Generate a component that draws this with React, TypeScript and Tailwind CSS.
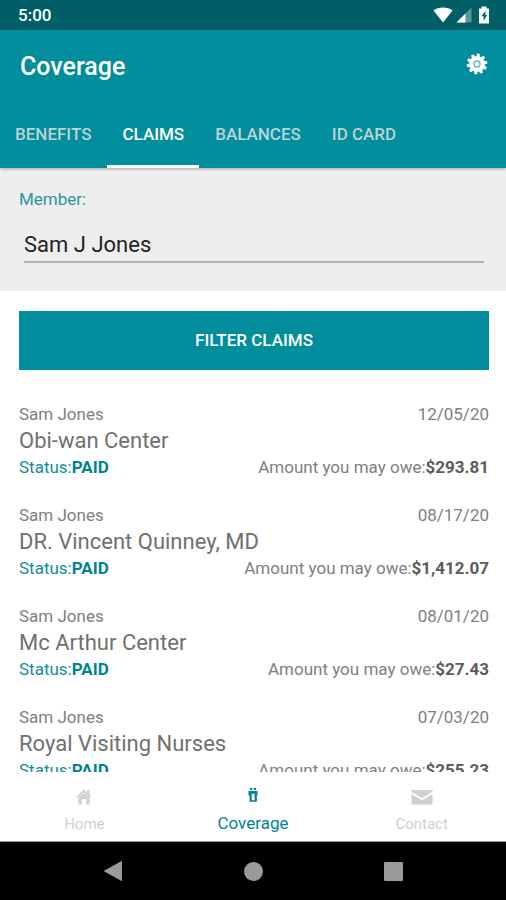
import { useState } from "react";
import clsx from "clsx";

type Claim = {
  member: string;
  date: string;
  provider: string;
  status: string;
  owed: string;
};

const TABS = ["BENEFITS", "CLAIMS", "BALANCES", "ID CARD"];

const CLAIMS: Claim[] = [
  { member: "Sam Jones", date: "12/05/20", provider: "Obi-wan Center", status: "PAID", owed: "$293.81" },
  { member: "Sam Jones", date: "08/17/20", provider: "DR. Vincent Quinney, MD", status: "PAID", owed: "$1,412.07" },
  { member: "Sam Jones", date: "08/01/20", provider: "Mc Arthur Center", status: "PAID", owed: "$27.43" },
  { member: "Sam Jones", date: "07/03/20", provider: "Royal Visiting Nurses", status: "PAID", owed: "$255.23" },
];

const GearIcon = () => (
  <svg viewBox="-11 -11 22 22" className="size-[22px]" aria-hidden="true">
    <circle r="7.8" fill="#fff" />
    {[0, 36, 72, 108, 144, 180, 216, 252, 288, 324].map((a) => (
      <path key={a} d="M-2 -7 L-1.3 -10.3 H1.3 L2 -7 Z" fill="#fff" transform={`rotate(${a + 8})`} />
    ))}
    <circle r="3" fill="none" stroke="#5fb5be" strokeWidth="1.3" />
    <circle r="1.2" fill="#d5eef0" />
  </svg>
);

const StatusBar = () => (
  <div className="flex h-[30px] shrink-0 items-center justify-between bg-[#005f66] pr-[13px] pl-[18px]">
    <span className="pt-0.5 text-[17px] font-medium text-white">5:00</span>
    <div className="flex items-center gap-[3px]" aria-hidden="true">
      <svg viewBox="0 0 20 16" className="h-4 w-5">
        <path d="M.5 3.4C6 -.4 14 -.4 19.5 3.4L10 15.5Z" fill="#fff" />
      </svg>
      <svg viewBox="0 0 16 16" className="size-4">
        <path d="M15.5 .5V15.5H.5Z" fill="#fff" opacity=".35" />
        <path d="M9.500 6.500V15.500H.5Z" fill="#fff" />
      </svg>
      <svg viewBox="0 0 18 18" className="size-[18px]">
        <path d="M6.500 .5h5v2H14v15H4v-15h2.500z" fill="#fff" />
        <path d="M10.300 4.800 6.600 10.200h2v4.600l3.600-5.800h-1.900z" fill="#005f66" />
      </svg>
    </div>
  </div>
);

const Header = () => {
  const [active, setActive] = useState("CLAIMS");

  return (
    <header className="z-10 shrink-0 bg-[#008d9c] shadow-[0_1px_3px_rgba(0,0,0,0.3)]">
      <div className="flex h-[72px] items-center justify-between pr-[18px] pl-5">
        <h1 className="pt-0.5 text-[25px] font-medium text-white">Coverage</h1>
        <button type="button" aria-label="Settings" className="pb-1">
          <GearIcon />
        </button>
      </div>
      <nav className="flex h-[66px] gap-px">
        {TABS.map((tab) => (
          <button
            key={tab}
            type="button"
            onClick={() => setActive(tab)}
            className={clsx(
              "border-y-[3px] border-t-transparent px-[15px] text-[17px] font-medium",
              tab === active ? "border-b-white text-white" : "border-b-transparent text-[#b9d3d6]"
            )}
          >
            {tab}
          </button>
        ))}
      </nav>
    </header>
  );
};

const ClaimRow = ({ claim }: { claim: Claim }) => (
  <li className="text-[17px] leading-6 text-[#808080]">
    <div className="flex justify-between">
      <span>{claim.member}</span>
      <span>{claim.date}</span>
    </div>
    <h2 className="text-[22px] leading-[29px] text-[#707070]">{claim.provider}</h2>
    <div className="flex justify-between">
      <span className="text-[#138c99]">
        Status:<b className="font-bold text-[#008391]">{claim.status}</b>
      </span>
      <span>
        Amount you may owe:<b className="font-bold text-[#5c5c5c]">{claim.owed}</b>
      </span>
    </div>
  </li>
);

const BottomNav = () => (
  <nav className="grid h-[70px] shrink-0 grid-cols-3 border-b border-[#999] bg-white text-[#d0d0d0]">
    <a href="#home" className="flex flex-col items-center pt-4 text-[15px] leading-5">
      <svg viewBox="0 0 16 18" className="mb-2 h-[18px] w-4" fill="currentColor" aria-hidden="true">
        <path d="M8 1.500 .8 8.500l1 1.200.7-.5v7.300h3.300V11h4.400v5.500h3.300V9.200l.7.5 1-1.200-1.700-1.600V2h-2.200v2.800z" />
        <path d="M2 10.300 8 5l6 5.300" fill="none" stroke="#fff" strokeWidth=".7" />
      </svg>
      Home
    </a>
    <a href="#coverage" className="flex flex-col items-center pt-3.5 text-[17px] leading-5 text-[#008391]">
      <svg viewBox="0 0 12 18" className="mb-[9px] h-[18px] w-3" fill="currentColor" aria-hidden="true">
        <circle cx="4.200" cy="3" r="1.300" />
        <circle cx="7.900" cy="3" r="1.300" />
        <path d="M1.500 5h9v4.500H9.800v6.300H2.600V9.500H1.500zM4.700 7.800v6.400h2.900V7.800z" fillRule="evenodd" />
      </svg>
      Coverage
    </a>
    <a href="#contact" className="flex flex-col items-center pt-4 text-[15px] leading-5">
      <svg viewBox="0 0 22 18" className="mb-2 h-[18px] w-[22px]" fill="currentColor" aria-hidden="true">
        <path d="M.5 2h21v1.800L11 10.300.5 3.800z" />
        <path d="M.5 6 11 12.300 21.500 6v10.500H.5z" />
      </svg>
      Contact
    </a>
  </nav>
);

const SystemNav = () => (
  <div className="flex h-[58px] shrink-0 items-center justify-center gap-[121px] bg-black text-[#9a9a9a]">
    <button type="button" aria-label="Back">
      <svg viewBox="0 0 20 22" className="h-[22px] w-5" fill="currentColor">
        <path d="M19 .8V21.200L.5 11z" />
      </svg>
    </button>
    <button type="button" aria-label="Home screen" className="size-[19px] rounded-full bg-current" />
    <button type="button" aria-label="Recent apps" className="size-[19px] rounded-[1px] bg-current" />
  </div>
);

export default function App() {
  const [member, setMember] = useState("Sam J Jones");

  return (
    <div className="flex h-screen flex-col overflow-hidden bg-white font-[Roboto,sans-serif]">
      <StatusBar />
      <Header />
      <main className="min-h-0 flex-1 overflow-hidden">
        <section className="bg-[#eee] pt-[19px] pr-[17px] pb-7 pl-[19px]">
          <label htmlFor="member" className="block text-[17px] leading-6 text-[#2f959f]">
            Member:
          </label>
          <div className="px-[5px] pt-[17px]">
            <input
              id="member"
              value={member}
              onChange={(e) => setMember(e.target.value)}
              className="block h-[35px] w-full border-b-2 border-[#b2b2b2] bg-transparent text-[22px] text-[#222] outline-none"
            />
          </div>
        </section>
        <section className="pt-5 pr-[17px] pl-[19px]">
          <button type="button" className="h-[59px] w-full bg-[#008d9c] text-[17px] font-medium text-white">
            FILTER CLAIMS
          </button>
          <ul className="mt-8 flex flex-col gap-6">
            {CLAIMS.map((claim) => (
              <ClaimRow key={claim.date} claim={claim} />
            ))}
          </ul>
        </section>
      </main>
      <BottomNav />
      <SystemNav />
    </div>
  );
}
